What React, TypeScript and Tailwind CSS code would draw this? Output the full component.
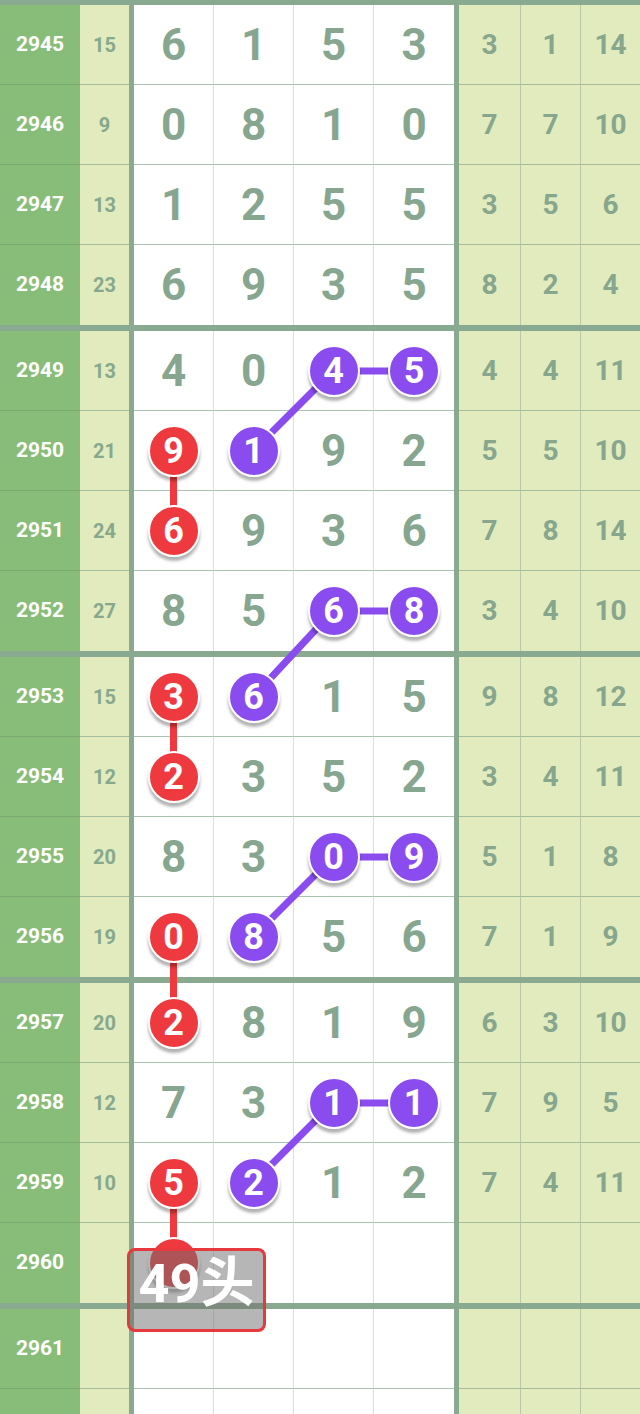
import React from "react";

type Row = { n: number; s?: number; d: string[]; r: (number | "")[]; m?: Record<number, "r" | "p"> };

const rows: Row[] = [
  { n: 2945, s: 15, d: ["6", "1", "5", "3"], r: [3, 1, 14] },
  { n: 2946, s: 9, d: ["0", "8", "1", "0"], r: [7, 7, 10] },
  { n: 2947, s: 13, d: ["1", "2", "5", "5"], r: [3, 5, 6] },
  { n: 2948, s: 23, d: ["6", "9", "3", "5"], r: [8, 2, 4] },
  { n: 2949, s: 13, d: ["4", "0", "4", "5"], r: [4, 4, 11], m: { 2: "p", 3: "p" } },
  { n: 2950, s: 21, d: ["9", "1", "9", "2"], r: [5, 5, 10], m: { 0: "r", 1: "p" } },
  { n: 2951, s: 24, d: ["6", "9", "3", "6"], r: [7, 8, 14], m: { 0: "r" } },
  { n: 2952, s: 27, d: ["8", "5", "6", "8"], r: [3, 4, 10], m: { 2: "p", 3: "p" } },
  { n: 2953, s: 15, d: ["3", "6", "1", "5"], r: [9, 8, 12], m: { 0: "r", 1: "p" } },
  { n: 2954, s: 12, d: ["2", "3", "5", "2"], r: [3, 4, 11], m: { 0: "r" } },
  { n: 2955, s: 20, d: ["8", "3", "0", "9"], r: [5, 1, 8], m: { 2: "p", 3: "p" } },
  { n: 2956, s: 19, d: ["0", "8", "5", "6"], r: [7, 1, 9], m: { 0: "r", 1: "p" } },
  { n: 2957, s: 20, d: ["2", "8", "1", "9"], r: [6, 3, 10], m: { 0: "r" } },
  { n: 2958, s: 12, d: ["7", "3", "1", "1"], r: [7, 9, 5], m: { 2: "p", 3: "p" } },
  { n: 2959, s: 10, d: ["5", "2", "1", "2"], r: [7, 4, 11], m: { 0: "r", 1: "p" } },
  { n: 2960, d: ["", "", "", ""], r: ["", "", ""], m: { 0: "r" } },
  { n: 2961, d: ["", "", "", ""], r: ["", "", ""] },
  { n: 0, d: ["", "", "", ""], r: ["", "", ""] },
];

const groups: Row[][] = [];
for (let i = 0; i < rows.length; i += 4) groups.push(rows.slice(i, i + 4));

function Circle({ kind, v }: { kind: "r" | "p"; v: string }) {
  const bg = kind === "r" ? "bg-[#ee3a3e]" : "bg-[#8a4cef]";
  return (
    <div
      className={`relative z-10 flex h-[52px] w-[52px] items-center justify-center rounded-full border-2 border-white ${bg} text-[36px] font-bold leading-none text-white shadow-[0_4px_3px_rgba(0,0,0,0.3)]`}
    >
      {v}
    </div>
  );
}

function RowView({ row, last }: { row: Row; last: boolean }) {
  const bb = last ? "" : "border-b";
  return (
    <div className="grid h-[80px] grid-cols-[80px_49px_5px_79px_80px_80px_81px_5px_61px_60px_60px]">
      <div className={`flex items-center justify-center bg-[#87bd78] text-[21px] font-bold text-white ${bb} border-[#7aa96f]`}>
        {row.n ? row.n : ""}
      </div>
      <div className={`flex items-center justify-center bg-[#e1ebbd] text-[20px] font-bold text-[#86a88e] ${bb} border-[#a3bd9d]`}>
        {row.s ?? ""}
      </div>
      <div className="bg-[#89aa91]" />
      {row.d.map((d, i) => (
        <div
          key={i}
          className={`flex items-center justify-center bg-white text-[44px] font-bold text-[#86a690] ${bb} border-b-[#abc2b0] ${i > 0 ? "border-l border-l-[#d9dfd9]" : ""}`}
        >
          {row.m && row.m[i] ? <Circle kind={row.m[i]} v={d} /> : d}
        </div>
      ))}
      <div className="bg-[#89aa91]" />
      {row.r.map((v, i) => (
        <div
          key={i}
          className={`flex items-center justify-center bg-[#e1ebbd] text-[28px] font-bold text-[#86a68e] ${bb} border-b-[#a3bd9d] ${i > 0 ? "border-l border-l-[#b8c8a6]" : ""}`}
        >
          {v}
        </div>
      ))}
    </div>
  );
}

const cx = [173.5, 253, 333, 413.5];
const cy = (idx: number) => {
  const g = Math.floor(idx / 4);
  const r = idx % 4;
  return 5 + g * 326 + r * 80 + 40;
};

export default function App() {
  const red: [number, number][] = [
    [5, 6],
    [8, 9],
    [11, 12],
    [14, 15],
  ];
  const purple: number[] = [4, 7, 10, 13];
  return (
    <div
      className="relative h-[1414px] w-[640px] overflow-hidden bg-white"
      style={{ fontFamily: "Roboto, 'Noto Sans', 'Noto Sans CJK SC', sans-serif" }}
    >
      {groups.map((g, gi) => (
        <div key={gi}>
          <div className={gi === 0 ? "h-[5px] bg-[#89aa91]" : "h-[6px] bg-[#89aa91]"} />
          {g.map((row, ri) => (
            <RowView key={ri} row={row} last={ri === 3} />
          ))}
        </div>
      ))}
      <svg className="pointer-events-none absolute left-0 top-0" width={640} height={1414}>
        {red.map(([a, b], i) => (
          <line key={"r" + i} x1={cx[0]} y1={cy(a)} x2={cx[0]} y2={cy(b)} stroke="#ee3a3e" strokeWidth={7} />
        ))}
        {purple.map((top, i) => (
          <g key={"p" + i}>
            <line x1={cx[1]} y1={cy(top + 1)} x2={cx[2]} y2={cy(top)} stroke="#8a4cef" strokeWidth={7} />
            <line x1={cx[2]} y1={cy(top)} x2={cx[3]} y2={cy(top)} stroke="#8a4cef" strokeWidth={7} />
          </g>
        ))}
      </svg>
      <div className="absolute left-[127px] top-[1248px] z-20 flex h-[84px] w-[139px] items-start justify-center rounded-[8px] border-[3px] border-[#e5393d] bg-[rgba(110,110,110,0.5)] text-[54px] font-bold leading-none text-white">
        <span className="mt-[6px]">49头</span>
      </div>
    </div>
  );
}
